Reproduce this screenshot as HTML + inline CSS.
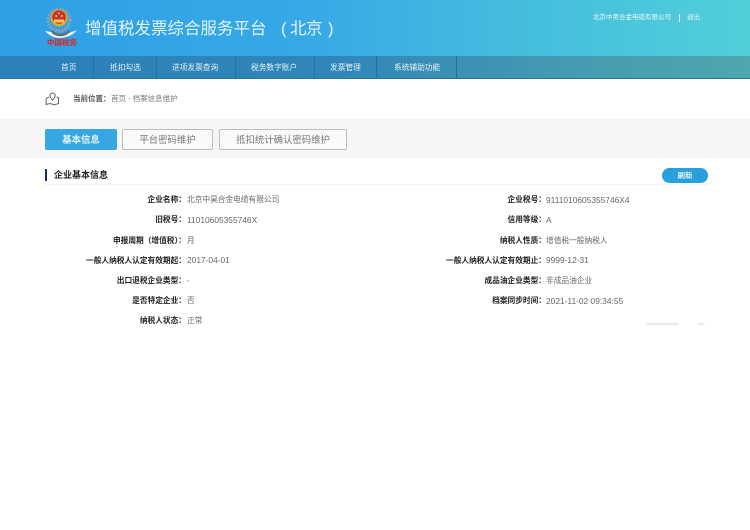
<!DOCTYPE html>
<html lang="zh-CN">
<head>
<meta charset="utf-8">
<title>增值税发票综合服务平台</title>
<style>
html,body{margin:0;padding:0;background:#fff;}
body{width:750px;height:530px;position:relative;overflow:hidden;font-family:"Liberation Sans","Noto Sans CJK SC",sans-serif;}
.a{position:absolute;white-space:nowrap;}
#hd{left:0;top:0;width:750px;height:56px;background:linear-gradient(90deg,#2f9fe6 0%,#36a8e6 40%,#42b8e0 62%,#52cfd8 100%);}
#nav{left:0;top:56px;width:750px;height:23px;background:linear-gradient(90deg,#2b81b8 0%,#3086b8 45%,#459ab0 75%,#4fa6ae 100%);border-bottom:1px solid #2d7497;box-sizing:border-box;}
.sep{top:56px;width:1px;height:23px;background:#276f9f;}
.n{top:56px;height:23px;line-height:23px;font-size:7.7px;color:#e4f3f8;filter:blur(.25px);}
.l,.v{font-size:7.7px;line-height:12px;filter:blur(.25px);}
.l{color:#222;font-weight:bold;text-align:right;}
.v{color:#666;}
.d{font-size:8.4px;}
.btn{top:129px;height:21px;box-sizing:border-box;border:1px solid #bdbdbd;border-radius:2px;background:#fafafa;color:#777;font-size:9.4px;line-height:19px;text-align:center;filter:blur(.2px);}
.t{top:18px;font-size:16.5px;line-height:22px;color:#e3f5fb;filter:blur(.3px);}
</style>
</head>
<body>
<div class="a" id="hd"></div>
<svg class="a" style="left:44px;top:5px" width="36" height="44" viewBox="0 0 36 44">
  <circle cx="15" cy="15" r="11" fill="none" stroke="#8fa3ad" stroke-width="3" stroke-dasharray="2 1.2"/>
  <path d="M1 26 C8 27 11 28 15 29 L21 29 C25 28 28 27 33 25 C29 30 25 32 16 33 C9 33 5 30 1 26Z" fill="#eef6f8"/>
  <path d="M8 26 C10 29 13 30 16 30 C20 30 23 29 25 26" fill="none" stroke="#5d6f78" stroke-width="2.5"/>
  <circle cx="15" cy="13" r="8.5" fill="#d9a93a"/>
  <circle cx="15" cy="12" r="6.8" fill="#c8332b"/>
  <rect x="10" y="14.5" width="10" height="3" fill="#f0c84e"/>
  <rect x="11.5" y="10" width="1.5" height="2" fill="#f4d060"/>
  <rect x="17" y="10" width="1.5" height="2" fill="#f4d060"/>
  <rect x="14.2" y="7.5" width="1.6" height="1.6" fill="#f4d060"/>
  <text x="3" y="40" font-size="7.5" font-weight="bold" fill="#d8261f" font-family="'Liberation Sans','Noto Sans CJK SC',sans-serif">中国税务</text>
</svg>
<div class="a t" style="left:85px">增值税发票综合服务平台</div>
<div class="a t" style="left:281px">(</div>
<div class="a t" style="left:290px;letter-spacing:-.5px">北京</div>
<div class="a t" style="left:328px">)</div>
<div class="a" style="left:593px;top:13px;font-size:6.5px;line-height:10px;color:#eefafb;filter:blur(.25px)">北京中昊合金电缆有限公司</div>
<div class="a" style="left:679px;top:14px;width:1px;height:8px;background:#eefafb"></div>
<div class="a" style="left:687px;top:13px;font-size:6.5px;line-height:10px;color:#eefafb;filter:blur(.25px)">退出</div>

<div class="a" id="nav"></div>
<div class="a sep" style="left:93px"></div>
<div class="a sep" style="left:156px"></div>
<div class="a sep" style="left:235px"></div>
<div class="a sep" style="left:314px"></div>
<div class="a sep" style="left:376px"></div>
<div class="a sep" style="left:456px"></div>
<div class="a n" style="left:61px">首页</div>
<div class="a n" style="left:110px">抵扣勾选</div>
<div class="a n" style="left:172px">进项发票查询</div>
<div class="a n" style="left:251px">税务数字账户</div>
<div class="a n" style="left:330px">发票管理</div>
<div class="a n" style="left:394px">系统辅助功能</div>

<svg class="a" style="left:45px;top:92px" width="15" height="14" viewBox="0 0 15 14" fill="none" stroke="#666" stroke-width="1">
  <path d="M7.5 8 C5.5 6 5 4.8 5 3.6 A2.6 2.6 0 0 1 10.2 3.6 C10.2 4.8 9.5 6 7.5 8Z"/>
  <path d="M4 5 L1.2 6.5 L1 12.5 L5 11.5 L9.5 12.8 L13.5 11.5 L13.5 5.5 L11.5 5"/>
</svg>
<div class="a" style="left:73px;top:93px;font-size:7.5px;line-height:12px;color:#555;font-weight:bold;filter:blur(.25px)">当前位置：</div>
<div class="a" style="left:111px;top:93px;font-size:7.5px;line-height:12px;color:#777;filter:blur(.25px)">首页 - 档案信息维护</div>

<div class="a" style="left:0;top:119px;width:750px;height:39px;background:#f6f6f6"></div>
<div class="a btn" style="left:45px;width:72px;background:#36a7e0;border-color:#36a7e0;color:#e6f5fb;font-weight:bold">基本信息</div>
<div class="a btn" style="left:122px;width:91px">平台密码维护</div>
<div class="a btn" style="left:219px;width:128px">抵扣统计确认密码维护</div>

<div class="a" style="left:45px;top:169px;width:2px;height:12px;background:#1c2a55"></div>
<div class="a" style="left:54px;top:169px;font-size:9px;line-height:13px;font-weight:bold;color:#222;filter:blur(.2px)">企业基本信息</div>
<div class="a" style="left:45px;top:184px;width:663px;height:1px;background:#f3f3f3"></div>
<div class="a" style="left:662px;top:168px;width:46px;height:15px;border-radius:8px;background:#27a0dc;color:#e8f6fb;font-size:7.5px;font-weight:bold;line-height:15px;text-align:center;filter:blur(.2px)">刷新</div>

<!-- left column -->
<div class="a l" style="right:564px;top:194px">企业名称：</div><div class="a v" style="left:187px;top:194px">北京中昊合金电缆有限公司</div>
<div class="a l" style="right:564px;top:214px">旧税号：</div><div class="a v d" style="left:187px;top:214px">11010605355746X</div>
<div class="a l" style="right:564px;top:235px">申报周期（增值税）：</div><div class="a v" style="left:187px;top:235px">月</div>
<div class="a l" style="right:564px;top:255px">一般人纳税人认定有效期起：</div><div class="a v d" style="left:187px;top:254px">2017-04-01</div>
<div class="a l" style="right:564px;top:275px">出口退税企业类型：</div><div class="a v" style="left:187px;top:275px">-</div>
<div class="a l" style="right:564px;top:295px">是否特定企业：</div><div class="a v" style="left:187px;top:295px">否</div>
<div class="a l" style="right:564px;top:315px">纳税人状态：</div><div class="a v" style="left:187px;top:315px">正常</div>

<!-- right column -->
<div class="a l" style="right:204px;top:194px">企业税号：</div><div class="a v d" style="left:546px;top:194px">9111010605355746X4</div>
<div class="a l" style="right:204px;top:214px">信用等级：</div><div class="a v d" style="left:546px;top:214px">A</div>
<div class="a l" style="right:204px;top:235px">纳税人性质：</div><div class="a v" style="left:546px;top:235px">增值税一般纳税人</div>
<div class="a l" style="right:204px;top:255px">一般人纳税人认定有效期止：</div><div class="a v d" style="left:546px;top:254px">9999-12-31</div>
<div class="a l" style="right:204px;top:275px">成品油企业类型：</div><div class="a v" style="left:546px;top:275px">非成品油企业</div>
<div class="a l" style="right:204px;top:295px">档案同步时间：</div><div class="a v d" style="left:546px;top:295px">2021-11-02 09:34:55</div>

<div class="a" style="left:647px;top:323px;width:32px;height:2px;background:#e6e6e6;filter:blur(.5px)"></div>
<div class="a" style="left:698px;top:323px;width:6px;height:2px;background:#e6e6e6;filter:blur(.5px)"></div>
</body>
</html>
